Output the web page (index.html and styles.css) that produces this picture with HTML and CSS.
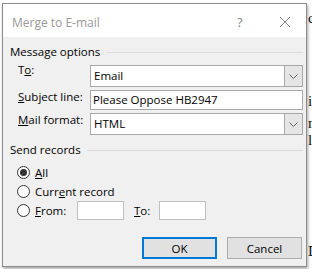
FILE: index.html
```html
<!DOCTYPE html>
<html>
<head>
<meta charset="utf-8">
<link rel="stylesheet" href="styles.css">
</head>
<body>
<div class="doc">
  <span class="frag f1">c</span>
  <span class="frag f2">i</span>
  <span class="frag f3">n</span>
  <span class="frag f4">l</span>
  <span class="frag f5">D</span>
</div>
<div class="dialog">
  <div class="titlebar">
    <span class="title">Merge to E-mail</span>
    <span class="help">?</span>
    <svg class="close" width="12" height="12" viewBox="0 0 12 12"><path d="M1 1L11 11M11 1L1 11" stroke="#8a8a8a" stroke-width="1" fill="none"/></svg>
  </div>
  <div class="client">
    <div class="group-head"><span>Message options</span><span class="rule"></span></div>
    <div class="form">
      <div class="row">
        <label class="lbl">T<u>o</u>:</label>
        <div class="combo"><span class="val">Email</span><span class="drop"><svg width="9" height="5" viewBox="0 0 9 5"><path d="M0.5 0.5L4.5 4.5L8.5 0.5" stroke="#606060" fill="none"/></svg></span></div>
      </div>
      <div class="row">
        <label class="lbl"><u>S</u>ubject line:</label>
        <div class="textbox"><span class="val">Please Oppose HB2947</span></div>
      </div>
      <div class="row">
        <label class="lbl"><u>M</u>ail format:</label>
        <div class="combo"><span class="val">HTML</span><span class="drop"><svg width="9" height="5" viewBox="0 0 9 5"><path d="M0.5 0.5L4.5 4.5L8.5 0.5" stroke="#606060" fill="none"/></svg></span></div>
      </div>
    </div>
    <div class="group-head second"><span>Send records</span><span class="rule"></span></div>
    <div class="radios">
      <div class="radio-row"><span class="radio checked"></span><span><u>A</u>ll</span></div>
      <div class="radio-row"><span class="radio"></span><span>Curr<u>e</u>nt record</span></div>
      <div class="radio-row"><span class="radio"></span><span class="from-lbl"><u>F</u>rom:</span><span class="small-box"></span><span class="to-lbl"><u>T</u>o:</span><span class="small-box"></span></div>
    </div>
    <div class="buttons">
      <button class="btn default">OK</button>
      <button class="btn">Cancel</button>
    </div>
  </div>
</div>
</body>
</html>
```
FILE: styles.css
```css
* { box-sizing: border-box; }
html, body { margin: 0; padding: 0; }
body {
  width: 312px;
  height: 269px;
  background: #ffffff;
  position: relative;
  overflow: hidden;
  font-family: "Open Sans", "Noto Sans", sans-serif;
  font-size: 11.5px;
  color: #000;
}
.doc { position: absolute; left: 0; top: 0; width: 312px; height: 269px; }
.frag {
  position: absolute;
  font-family: "Liberation Serif", serif;
  font-size: 15px;
  color: #111;
  left: 308px;
}
.f1 { top: 10px; }
.f2 { top: 93px; }
.f3 { top: 115px; }
.f4 { top: 132px; }
.f5 { top: 243px; }
.dialog {
  position: relative;
  margin: 3px 0 0 2px;
  width: 305px;
  height: 264px;
  border: 1px solid #8c8c8c;
  background: #f0f0f0;
  box-shadow: 1px 2px 3px rgba(0,0,0,0.35);
  display: flex;
  flex-direction: column;
}
.titlebar {
  height: 33px;
  background: #fff;
  display: flex;
  align-items: center;
  padding: 3px 0 0 9px;
  color: #999;
}
.title { font-size: 12px; flex: 1; }
.help { font-size: 13px; width: 20px; margin-right: 22px; color: #888; }
.close { margin-right: 15px; }
.client {
  flex: 1;
  padding: 7px 3px 0 7px;
  display: flex;
  flex-direction: column;
}
.group-head {
  display: flex;
  align-items: center;
  height: 16px;
  line-height: 16px;
}
.group-head .rule {
  flex: 1;
  height: 1px;
  background: #dcdcdc;
  margin-left: 6px;
}
.group-head.second { margin-top: 7px; }
.form { margin-top: 5px; display: flex; flex-direction: column; gap: 3px; }
.row { display: flex; align-items: flex-start; padding-left: 8px; }
.lbl { width: 72px; line-height: 14px; }
.combo {
  flex: 1;
  height: 22px;
  border: 1px solid #a8a8a8;
  background: #fff;
  display: flex;
  align-items: center;
}
.val { flex: 1; padding-left: 3px; line-height: 18px; }
.drop {
  width: 18px;
  height: 20px;
  background: #e5e5e5;
  border-left: 1px solid #a8a8a8;
  display: flex;
  align-items: center;
  justify-content: center;
}
.textbox {
  flex: 1;
  height: 20px;
  border: 1px solid #a8a8a8;
  background: #fff;
  display: flex;
  align-items: center;
}
.textbox .val { padding-left: 2px; }
.row:nth-child(1) .lbl { margin-top: -2px; }
.row:nth-child(2) .lbl { padding-top: 0; }
.row:nth-child(3) .lbl { padding-top: 0; }
.radios { margin-top: 5px; display: flex; flex-direction: column; padding-left: 7px; }
.radio-row { height: 19px; display: flex; align-items: center; }
.radio {
  width: 13px;
  height: 13px;
  border: 1px solid #333;
  border-radius: 50%;
  background: #fff;
  margin-right: 5px;
  display: flex;
  align-items: center;
  justify-content: center;
}
.radio.checked::after {
  content: "";
  width: 7px;
  height: 7px;
  border-radius: 50%;
  background: #333;
}
.from-lbl { width: 42px; }
.small-box {
  width: 47px;
  height: 19px;
  border: 1px solid #bfbfbf;
  background: #fff;
}
.to-lbl { margin-left: 10px; width: 25px; }
.buttons {
  margin-top: 17px;
  display: flex;
  justify-content: flex-end;
  gap: 10px;
  padding-right: 1px;
}
.btn {
  width: 75px;
  height: 22px;
  font-family: inherit;
  font-size: 11.5px;
  background: #e1e1e1;
  border: 1px solid #adadad;
  color: #000;
  padding: 0;
}
.btn.default { border: 2px solid #0078d7; }
```
